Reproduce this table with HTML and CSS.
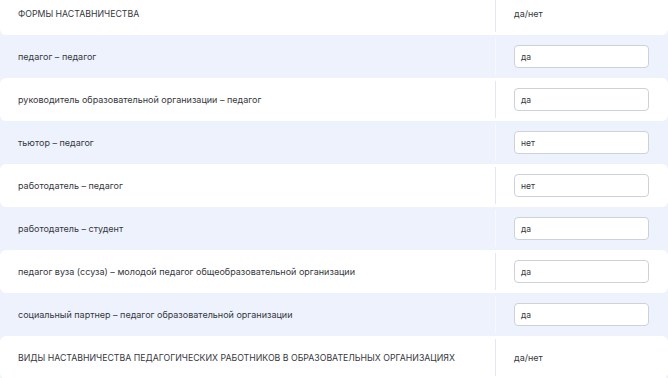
FILE: index.html
```html
<!DOCTYPE html>
<html lang="ru">
<head>
<meta charset="utf-8">
<link rel="stylesheet" href="styles.css">
</head>
<body>
<div class="table">
  <div class="row row--white row--first">
    <div class="cell cell--label head">ФОРМЫ НАСТАВНИЧЕСТВА</div>
    <div class="cell cell--value"><span class="head-val">да/нет</span></div>
  </div>
  <div class="row">
    <div class="cell cell--label">педагог – педагог</div>
    <div class="cell cell--value"><div class="input">да</div></div>
  </div>
  <div class="row row--white">
    <div class="cell cell--label">руководитель образовательной организации – педагог</div>
    <div class="cell cell--value"><div class="input">да</div></div>
  </div>
  <div class="row">
    <div class="cell cell--label">тьютор – педагог</div>
    <div class="cell cell--value"><div class="input">нет</div></div>
  </div>
  <div class="row row--white">
    <div class="cell cell--label">работодатель – педагог</div>
    <div class="cell cell--value"><div class="input">нет</div></div>
  </div>
  <div class="row">
    <div class="cell cell--label">работодатель – студент</div>
    <div class="cell cell--value"><div class="input">да</div></div>
  </div>
  <div class="row row--white">
    <div class="cell cell--label">педагог вуза (ссуза) – молодой педагог общеобразовательной организации</div>
    <div class="cell cell--value"><div class="input">да</div></div>
  </div>
  <div class="row">
    <div class="cell cell--label">социальный партнер – педагог образовательной организации</div>
    <div class="cell cell--value"><div class="input">да</div></div>
  </div>
  <div class="row row--white">
    <div class="cell cell--label head">ВИДЫ НАСТАВНИЧЕСТВА ПЕДАГОГИЧЕСКИХ РАБОТНИКОВ В ОБРАЗОВАТЕЛЬНЫХ ОРГАНИЗАЦИЯХ</div>
    <div class="cell cell--value"><span class="head-val">да/нет</span></div>
  </div>
</div>
</body>
</html>
```
FILE: styles.css
```css
html, body {
  margin: 0;
  padding: 0;
  background: #edf2fc;
  overflow: hidden;
}
body {
  font-family: Inter, "Noto Sans", sans-serif;
  color: #35373c;
  font-size: 9px;
}
.table {
  display: flex;
  flex-direction: column;
  margin-top: -8px;
}
.row {
  display: grid;
  grid-template-columns: 495px 1fr;
  height: 43px;
  align-items: stretch;
}
.row--white {
  background: #ffffff;
  border-radius: 6px;
}
.cell {
  display: flex;
  align-items: center;
}
.cell--label {
  padding-left: 18px;
}
.cell--value {
  padding-left: 18px;
  padding-right: 19px;
  border-left: 1px solid #e3e8f0;
  margin: 3px 0;
}
.row:not(.row--white) .cell--value {
  border-left-color: #f6f9fe;
}
.head {
  font-size: 8.75px;
}
.input {
  flex: 1;
  box-sizing: border-box;
  height: 23px;
  border: 1px solid #cdd2da;
  border-radius: 4px;
  background: #fff;
  padding-left: 6px;
  display: flex;
  align-items: center;
  font-size: 8.5px;
}
```
